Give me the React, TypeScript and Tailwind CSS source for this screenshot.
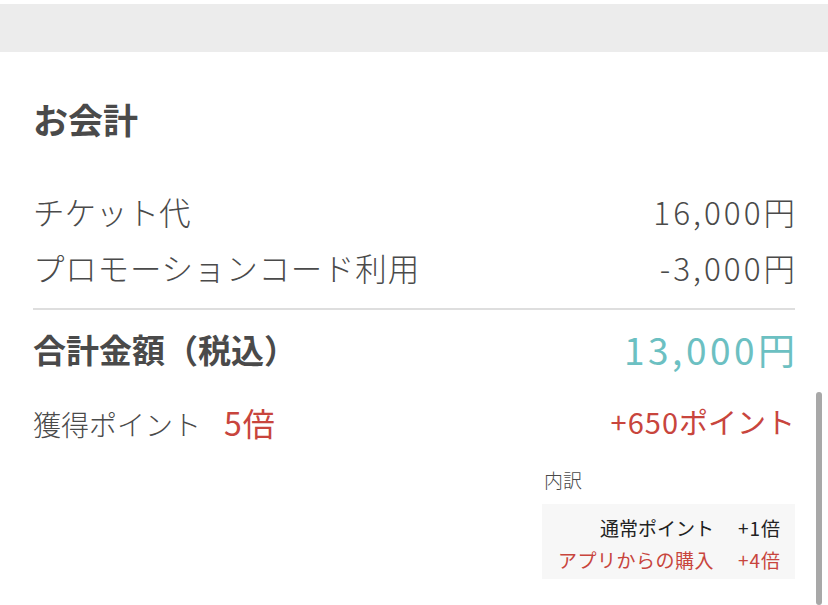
import React from 'react';

const font = { fontFamily: '"Noto Sans CJK JP", "Noto Sans", sans-serif' };

export default function App() {
  return (
    <div className="relative w-[828px] h-[605px] overflow-hidden bg-white text-[#4a4a4a]" style={font}>
      {/* top bar */}
      <div className="mt-[4px] h-[48px] bg-[#ececec]" />

      <div className="px-[33px]">
        {/* title */}
        <h2 className="mt-[47px] text-[35px] font-bold leading-[40px] text-[#4a4a4a]">お会計</h2>

        {/* line items */}
        <div className="mt-[45px] flex flex-col">
          <div className="flex items-center justify-between h-[56px] text-[31.5px] font-light">
            <span>チケット代</span>
            <span>
              <span className="tracking-[3px]">16,000</span>円
            </span>
          </div>
          <div className="flex items-center justify-between h-[56px] text-[31.5px] font-light">
            <span className="tracking-[0.8px]">プロモーションコード利用</span>
            <span>
              <span className="tracking-[3px]">-3,000</span>円
            </span>
          </div>
        </div>

        <div className="mt-[12px] h-[2px] bg-[#dedede]" />

        {/* total */}
        <div className="mt-[10px] flex items-center justify-between h-[60px]">
          <span className="text-[33px] font-bold">合計金額（税込）</span>
          <span className="text-[37px] text-[#6cc0c2]">
            <span className="tracking-[3.5px]">13,000</span>円
          </span>
        </div>

        {/* points */}
        <div className="mt-[17px] flex items-center justify-between h-[50px]">
          <div className="flex items-baseline">
            <span className="text-[28px] font-light">獲得ポイント</span>
            <span className="ml-[23px] text-[32px] text-[#c8453d]">
              <span className="tracking-[1px]">5</span>倍
            </span>
          </div>
          <span className="text-[29px] text-[#c8453d]">
            <span className="tracking-[1px]">+650</span>ポイント
          </span>
        </div>

        {/* breakdown */}
        <div className="mt-[20px] flex justify-end">
          <div className="w-[253px]">
            <div className="text-[19px] leading-[26px] font-light pl-[2px]">内訳</div>
            <div className="mt-[11px] bg-[#f7f7f7] pt-[8px] pb-[3px] pr-[15px] flex flex-col items-end text-[19px] leading-[32px]">
              <div className="flex gap-[24px] text-[#222]">
                <span>通常ポイント</span>
                <span>
                  <span className="tracking-[1px]">+1</span>倍
                </span>
              </div>
              <div className="flex gap-[24px] text-[#c8453d]">
                <span className="tracking-[0.5px]">アプリからの購入</span>
                <span>
                  <span className="tracking-[1px]">+4</span>倍
                </span>
              </div>
            </div>
          </div>
        </div>
      </div>

      {/* scroll indicator */}
      <div className="absolute right-[6px] top-[392px] h-[213px] w-[6px] rounded-full bg-[#a8a8a8]" />
    </div>
  );
}
